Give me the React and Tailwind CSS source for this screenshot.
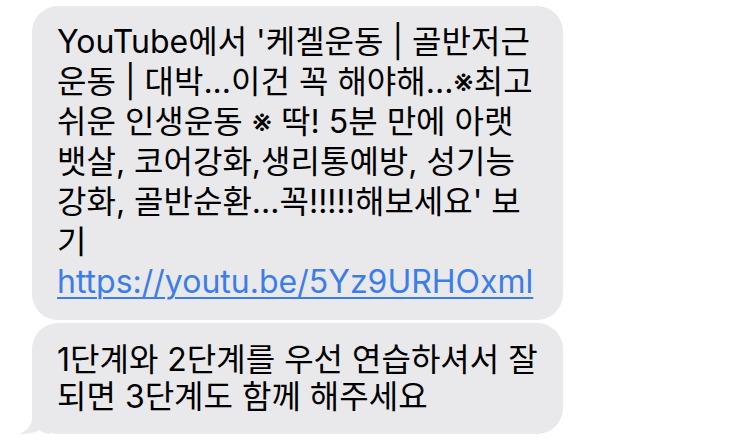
import React from "react";

const lines = [
  "YouTube에서 '케겔운동 | 골반저근",
  "운동 | 대박...이건 꼭 해야해...※최고",
  "쉬운 인생운동 ※ 딱! 5분 만에 아랫",
  "뱃살, 코어강화,생리통예방, 성기능",
  "강화, 골반순환...꼭!!!!!해보세요' 보",
  "기",
];

const font = { fontFamily: 'Inter, "Noto Sans CJK KR", sans-serif' };

export default function App() {
  return (
    <div className="w-[750px] h-[440px] bg-white overflow-hidden" style={font}>
      <div className="flex flex-col gap-[3px] pl-[32px] pt-[6px]">
        {/* Link preview message */}
        <div className="w-[531px] rounded-[26px] bg-[#e9e9eb] pl-[25px] pt-[16px] pb-[18px] text-[32px] leading-[40px] text-black">
          {lines.map((l) => (
            <div key={l} className="whitespace-nowrap">{l}</div>
          ))}
          <div className="whitespace-nowrap text-[#3b7de9] underline decoration-[2px] underline-offset-[4px]">
            https://youtu.be/5Yz9URHOxml
          </div>
        </div>

        {/* Second message with tail */}
        <div className="relative w-[531px]">
          <div className="rounded-[26px] bg-[#e9e9eb] pl-[25px] pt-[18px] pb-[19px] text-[32px] leading-[37px] text-black">
            <div className="whitespace-nowrap">1단계와 2단계를 우선 연습하셔서 잘</div>
            <div className="whitespace-nowrap">되면 3단계도 함께 해주세요</div>
          </div>
          <svg className="absolute left-[-12px] bottom-0" width="30" height="30" viewBox="0 0 30 30">
            <path d="M12 0 L12 14 C12 22 6 27 0 30 C8 30 14 29 19 26 C22 28 26 30 30 30 L30 0 Z" fill="#e9e9eb" />
          </svg>
        </div>
      </div>
    </div>
  );
}
